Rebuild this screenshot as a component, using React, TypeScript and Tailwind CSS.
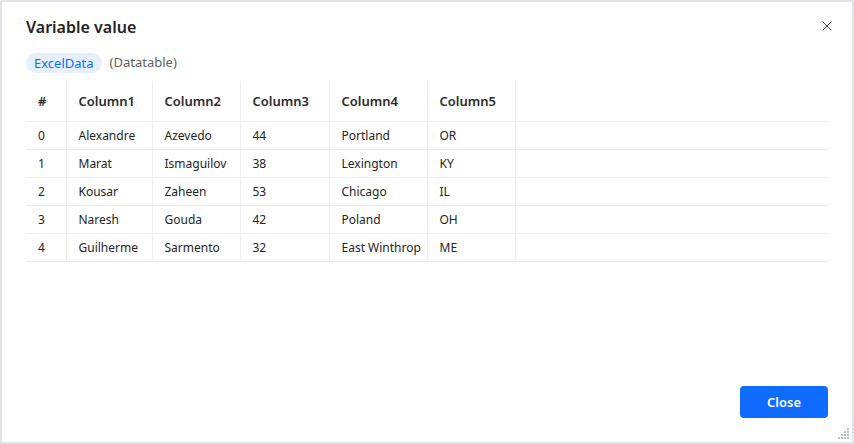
import { X } from 'lucide-react';

const columns = ['#', 'Column1', 'Column2', 'Column3', 'Column4', 'Column5'];
const widths = ['w-[40px]', 'w-[86px]', 'w-[88px]', 'w-[89px]', 'w-[98px]', 'w-[88px]'];

const rows = [
  ['0', 'Alexandre', 'Azevedo', '44', 'Portland', 'OR'],
  ['1', 'Marat', 'Ismaguilov', '38', 'Lexington', 'KY'],
  ['2', 'Kousar', 'Zaheen', '53', 'Chicago', 'IL'],
  ['3', 'Naresh', 'Gouda', '42', 'Poland', 'OH'],
  ['4', 'Guilherme', 'Sarmento', '32', 'East Winthrop', 'ME'],
];

function ResizeGrip() {
  const dots = [
    [9, 1],
    [9, 4], [6, 4],
    [9, 7], [6, 7], [3, 7],
    [9, 10], [6, 10], [3, 10], [0, 10],
  ];
  return (
    <svg width="11" height="12" viewBox="0 0 11 12" className="absolute bottom-[3px] right-[3px]">
      {dots.map(([x, y], i) => (
        <rect key={i} x={x} y={y} width="2" height="2" fill="#b5bccb" />
      ))}
    </svg>
  );
}

export default function App() {
  return (
    <div
      className="h-[444px] w-[854px] bg-[#e1e5ea] p-[2px] text-[#242424]"
      style={{ fontFamily: '"Noto Sans", "Open Sans", sans-serif' }}
    >
      <div className="relative flex h-full flex-col bg-white px-6 pb-6 pt-[14px]">
        {/* Header */}
        <div className="flex items-center justify-between">
          <h1 className="text-[16px] font-semibold leading-[22px]">Variable value</h1>
          <button className="-mr-[7px] -mt-[2px] text-[#424242]" aria-label="Close">
            <X size={16} strokeWidth={1.5} />
          </button>
        </div>

        {/* Variable name */}
        <div className="mt-[15px] flex items-center gap-2 text-[13px]">
          <span className="rounded-full bg-[#e6f0fd] px-2 py-[1px] leading-[18px] text-[#0f6cff]">ExcelData</span>
          <span className="text-[#616161]">(Datatable)</span>
        </div>

        {/* Table */}
        <div className="mt-2">
          <table className="w-full table-fixed border-collapse text-left">
            <thead>
              <tr className="h-[40px] border-b border-[#efefef]">
                {columns.map((c, i) => (
                  <th
                    key={c}
                    className={`${widths[i]} whitespace-nowrap border-r border-[#efefef] px-3 pt-[2px] text-[13px] font-semibold text-[#2b2b2b]`}
                  >
                    {c}
                  </th>
                ))}
                <th />
              </tr>
            </thead>
            <tbody>
              {rows.map((r) => (
                <tr key={r[0]} className="h-[28px] border-b border-[#efefef]">
                  {r.map((v, i) => (
                    <td
                      key={i}
                      className="overflow-hidden whitespace-nowrap border-r border-[#efefef] px-3 pt-[2px] text-[12px]"
                    >
                      {v}
                    </td>
                  ))}
                  <td />
                </tr>
              ))}
            </tbody>
          </table>
        </div>

        {/* Footer */}
        <div className="mt-auto flex justify-end">
          <button className="h-[32px] w-[88px] rounded-[4px] bg-[#0f6cff] pt-[2px] text-[13px] font-semibold text-white">
            Close
          </button>
        </div>

        <ResizeGrip />
      </div>
    </div>
  );
}
